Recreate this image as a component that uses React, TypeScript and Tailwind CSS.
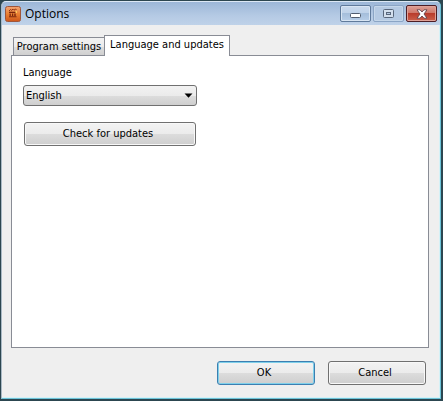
import React, { useState } from "react";

const buttonBase =
  "h-6 rounded-[3px] border text-[11px] leading-4 text-black pr-1 bg-[linear-gradient(#f3f3f3,#ebebeb_50%,#dcdcdc_51%,#cecece)]";

function AppIcon() {
  return (
    <svg className="h-4 w-4" viewBox="0 0 16 16" aria-hidden="true">
      <defs>
        <linearGradient id="appIcon" x1="0" y1="0" x2="0" y2="1">
          <stop offset="0" stopColor="#f3a576" />
          <stop offset="0.5" stopColor="#ea8032" />
          <stop offset="1" stopColor="#cf561a" />
        </linearGradient>
      </defs>
      <rect x="0.5" y="0.5" width="15" height="15" rx="2" fill="url(#appIcon)" stroke="#a0563a" />
      <path d="M4 5l1.5-1.5 1 .8L8 3.2l1 1L10.5 3l1 1" fill="none" stroke="#8c3010" />
      <path d="M4 5.8h7.5v1.2H4zM4.5 7.5h1.3V10H4.5zM7 7.5h1.2V10H7zM9.3 7.5h1.4V10H9.3zM4 10.3h7.5v1H4z" fill="#7c260c" />
      <path d="M10.5 5H12v2h-1.5z" fill="#ffc95a" />
    </svg>
  );
}

function App() {
  const [tab, setTab] = useState("language");
  const [language, setLanguage] = useState("English");

  return (
    <div className="flex min-h-screen flex-col bg-[#2c4650] pt-px pr-0.5 pb-0.5 pl-px font-['DejaVu_Sans_Condensed','DejaVu_Sans',sans-serif] text-[11px] leading-4 text-black">
      <div className="flex flex-1 flex-col overflow-hidden rounded-t-[5px] border border-t-[#dce8f5] border-r-[#6cc3d8] border-b-[#6cc3d8] border-l-[#a9b9c5] bg-[#efefef]">
        <header className="flex h-[23px] items-center bg-[linear-gradient(#9cb7d8,#b5cae4_60%,#bfd2e9)] px-[3px]">
          <AppIcon />
          <h1 className="ml-1 flex-1 font-['Open_Sans',sans-serif] text-[12px]">Options</h1>
          <div className="flex gap-0.5">
            <button
              aria-label="Minimize"
              className="flex h-[17px] w-[31px] items-center justify-center rounded-[2px] border border-[#5f7a9b] bg-[linear-gradient(#c9daed,#bfd2e9_45%,#a5bedb_50%,#b8cee8)] inset-ring inset-ring-[#d8e5f3]"
            >
              <svg className="mt-1 h-[5px] w-[11px]" viewBox="0 0 11 5">
                <rect x="0.5" y="0.5" width="10" height="4" rx="1" fill="#fff" stroke="#515c6e" />
              </svg>
            </button>
            <button
              aria-label="Maximize"
              className="flex h-[17px] w-[31px] items-center justify-center rounded-[2px] border border-[#8ba5c5] bg-[#b5cae3] inset-ring inset-ring-[#c5d7ea]"
            >
              <svg className="h-[9px] w-[11px]" viewBox="0 0 11 9">
                <rect x="0.5" y="0.5" width="10" height="8" rx="1" fill="#d3dfed" stroke="#59677b" />
                <rect x="3.5" y="3.5" width="4" height="2" fill="#b5cae3" stroke="#59677b" />
              </svg>
            </button>
            <button
              aria-label="Close"
              className="flex h-[17px] w-[31px] items-center justify-center rounded-[2px] border border-[#4c1d25] bg-[linear-gradient(#dda096,#cf786b_45%,#b93c2c_50%,#cb604b)] inset-ring inset-ring-[#e0a197]"
            >
              <svg className="h-[10px] w-[12px]" viewBox="0 0 12 10">
                <path
                  d="M1 .8h3l2 2.200 2-2.200h3L8 5l3 4.200H8L6 7 4 9.200H1L4 5z"
                  fill="#fff"
                  stroke="#64444d"
                  strokeWidth="0.9"
                />
              </svg>
            </button>
          </div>
        </header>

        <main className="flex flex-1 flex-col border-r border-b border-[#d5f1f6] pt-2.5 pr-2.5 pl-[9px]">
          <div role="tablist" className="relative -mb-px flex items-end pl-0.5">
            <button
              role="tab"
              aria-selected={tab === "program"}
              onClick={() => setTab("program")}
              className="h-[19px] w-[91px] border border-r-0 border-[#898c95] bg-[linear-gradient(#f2f2f2,#ebebeb_50%,#dddddd_51%,#d0d0d0)] whitespace-nowrap"
            >
              Program settings
            </button>
            <button
              role="tab"
              aria-selected={tab === "language"}
              onClick={() => setTab("language")}
              className="h-[21px] w-[126px] border border-b-0 border-[#898c95] bg-white pb-0.5 whitespace-nowrap"
            >
              Language and updates
            </button>
          </div>

          <section className="flex flex-1 flex-col items-start border border-[#898c95] bg-white pt-[9px] pl-[11px]">
            <label htmlFor="language">Language</label>
            <div className="relative mt-1">
              <select
                id="language"
                value={language}
                onChange={(e) => setLanguage(e.target.value)}
                className="block h-[21px] w-[174px] appearance-none rounded-[3px] border border-[#707070] bg-[linear-gradient(#f2f2f2,#ebebeb_50%,#dddddd_51%,#cfcfcf)] pl-0.5"
              >
                <option>English</option>
              </select>
              <svg className="pointer-events-none absolute top-2 right-1 h-[5px] w-[9px]" viewBox="0 0 9 5">
                <path d="M.5 .5h8L4.5 4.8z" fill="#000" />
              </svg>
            </div>
            <button className={`${buttonBase} mt-4 ml-px w-[172px] border-[#707070] inset-ring inset-ring-[#f8f8f8]`}>
              Check for updates
            </button>
          </section>

          <footer className="flex justify-end gap-[13px] pt-[13px] pr-[3px] pb-3">
            <button className={`${buttonBase} w-[98px] border-[#3c7fb1] inset-ring inset-ring-[#7fd0ea]`}>OK</button>
            <button className={`${buttonBase} w-[98px] border-[#707070] inset-ring inset-ring-[#f8f8f8]`}>
              Cancel
            </button>
          </footer>
        </main>
      </div>
    </div>
  );
}

export default App;
